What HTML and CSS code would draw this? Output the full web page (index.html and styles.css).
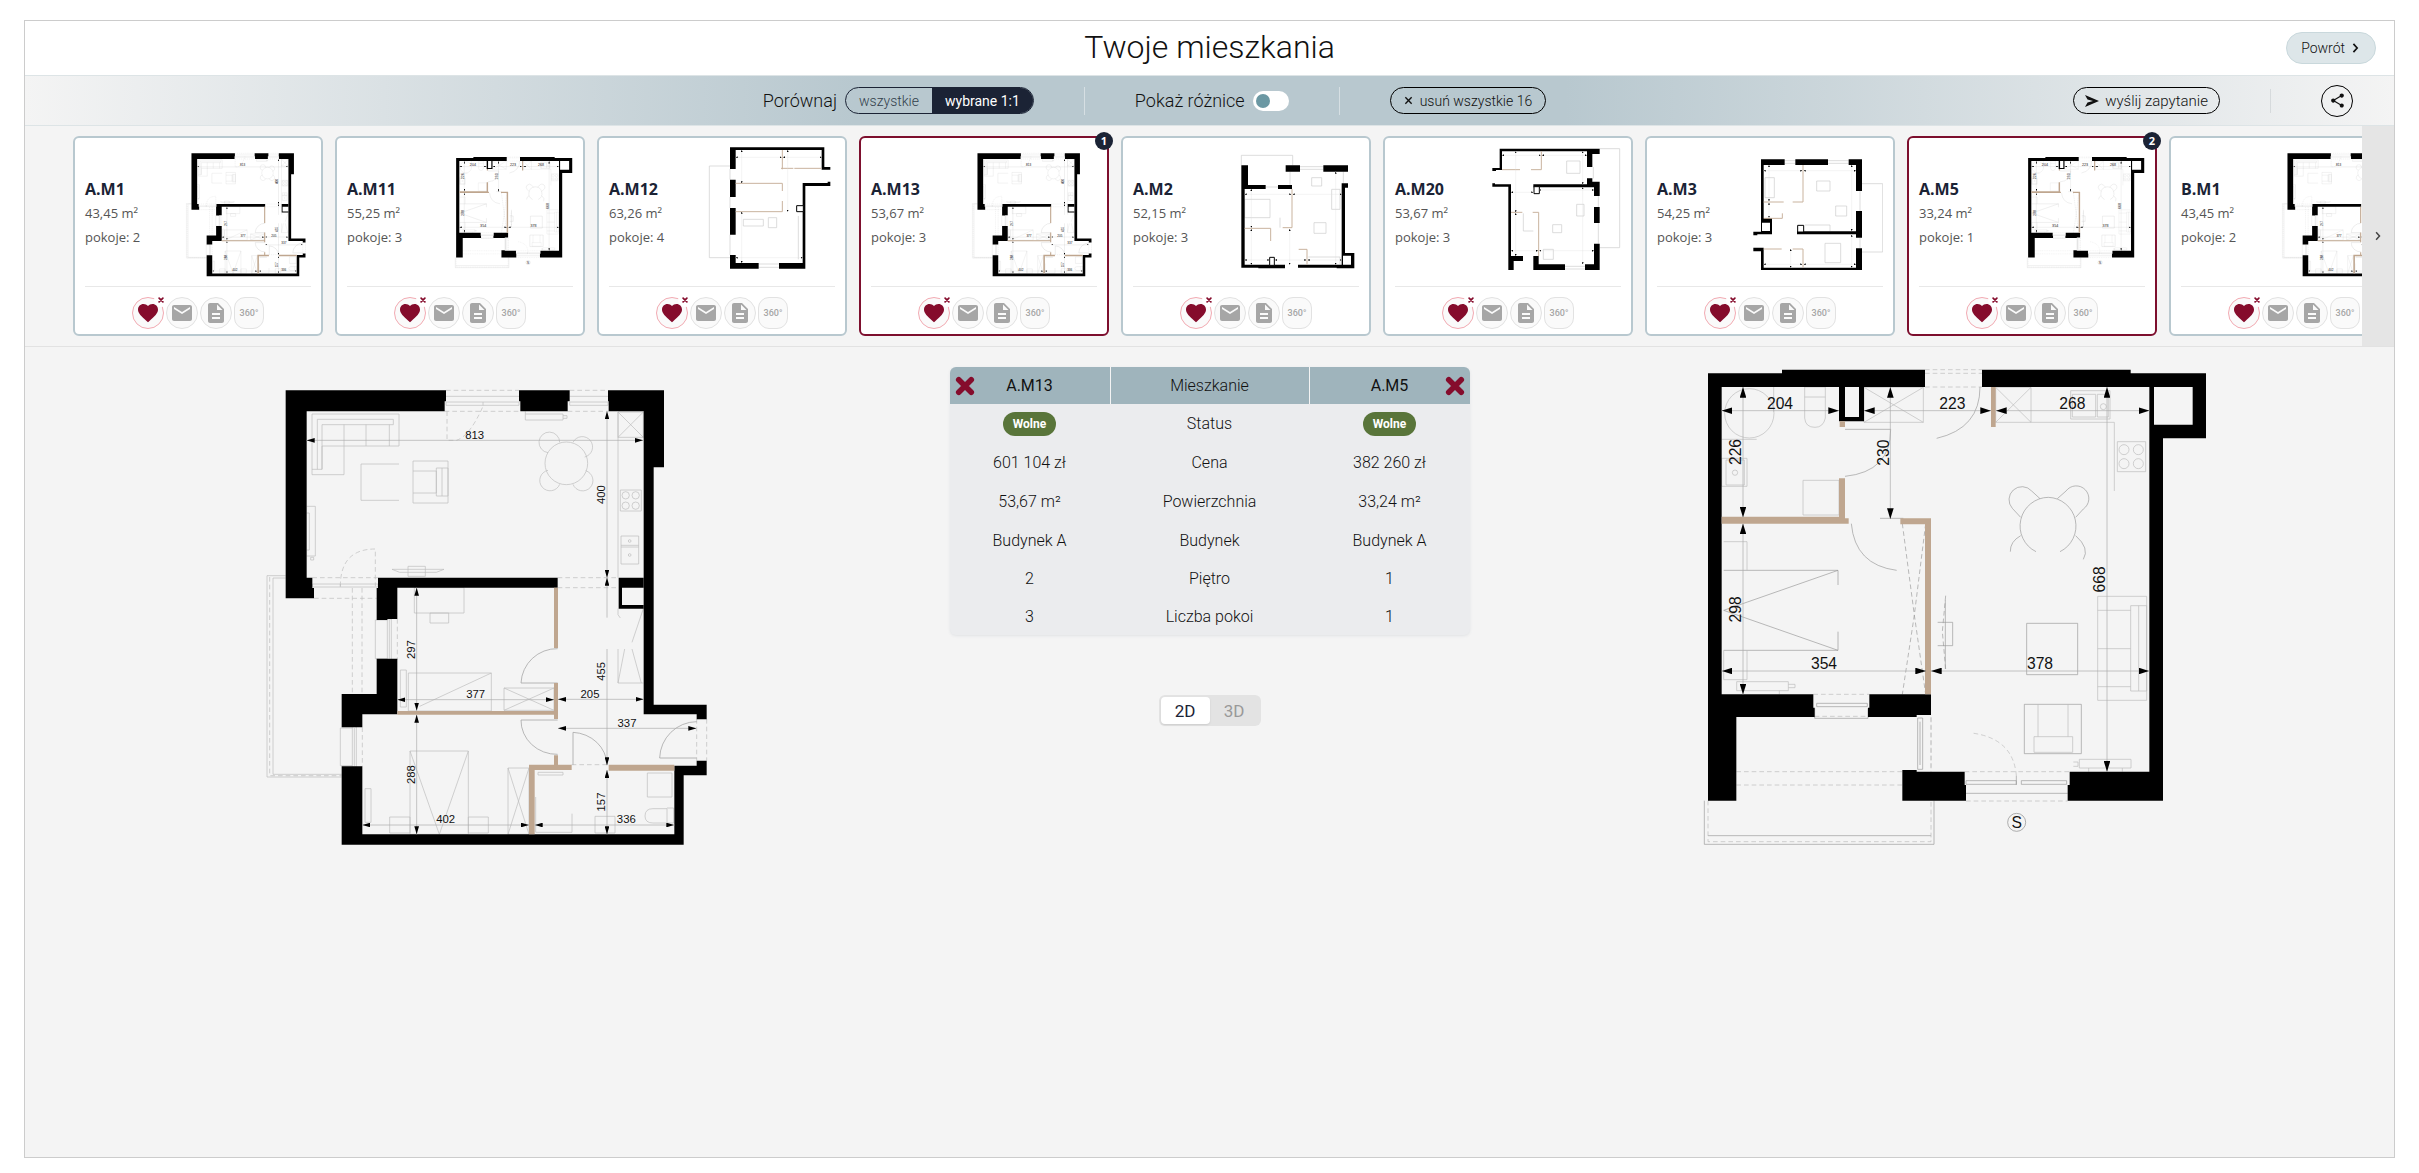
FILE: index.html
```html
<!DOCTYPE html>
<html lang="pl">
<head>
  <meta charset="UTF-8">
  <meta name="viewport" content="width=device-width, initial-scale=1.0">
  <title>Twoje mieszkania</title>
  <link rel="stylesheet" href="styles.css">
</head>
<body>

<!-- ikony i rzuty mieszkań -->
<svg class="defs" width="0" height="0" aria-hidden="true">
  <defs>
    <symbol id="i-heart" viewBox="0 0 24 24"><path d="M12 21.35l-1.45-1.32C5.4 15.36 2 12.28 2 8.5 2 5.42 4.42 3 7.5 3c1.74 0 3.41.81 4.5 2.09C13.09 3.81 14.76 3 16.5 3 19.58 3 22 5.42 22 8.5c0 3.78-3.4 6.86-8.55 11.54L12 21.35z"/></symbol>
    <symbol id="i-mail" viewBox="0 0 24 24"><path d="M20 4H4c-1.1 0-2 .9-2 2v12c0 1.1.9 2 2 2h16c1.1 0 2-.9 2-2V6c0-1.1-.9-2-2-2zm0 4l-8 5-8-5V6l8 5 8-5v2z"/></symbol>
    <symbol id="i-doc" viewBox="0 0 24 24"><path d="M14 2H6c-1.1 0-2 .9-2 2v16c0 1.1.9 2 2 2h12c1.1 0 2-.9 2-2V8l-6-6zm2 16H8v-2h8v2zm0-4H8v-2h8v2zm-3-5V3.500L18.500 9H13z"/></symbol>
    <symbol id="i-x" viewBox="0 0 16 16"><path d="M3 3l10 10M13 3L3 13" fill="none" stroke="currentColor" stroke-width="4.500" stroke-linecap="round"/></symbol>
    <symbol id="i-close" viewBox="0 0 10 10"><path d="M1.500 1.500l7 7M8.500 1.500l-7 7" fill="none" stroke="currentColor" stroke-width="1.500"/></symbol>
    <symbol id="i-next" viewBox="0 0 8 12"><path d="M1.500 1l4.500 5-4.500 5" fill="none" stroke="currentColor" stroke-width="2"/></symbol>
    <symbol id="i-send" viewBox="0 0 14 12"><path d="M0 0l14 6-14 6 2.500-4.500L8 6 2.500 4.500z"/></symbol>
    <symbol id="i-share" viewBox="0 0 24 24"><path d="M18 16.080c-.76 0-1.440.3-1.960.77L8.910 12.700c.05-.23.09-.46.09-.7s-.04-.47-.09-.7l7.050-4.110c.54.5 1.250.81 2.040.81 1.660 0 3-1.340 3-3s-1.340-3-3-3-3 1.340-3 3c0 .24.04.47.09.7L8.040 9.810C7.500 9.310 6.790 9 6 9c-1.660 0-3 1.340-3 3s1.340 3 3 3c.79 0 1.500-.31 2.040-.81l7.120 4.160c-.05.21-.08.43-.08.65 0 1.610 1.310 2.920 2.920 2.920s2.920-1.310 2.920-2.920-1.310-2.920-2.920-2.920z"/></symbol>

    <marker id="arrow-s" viewBox="0 0 24 14" refX="24" refY="7" markerWidth="24" markerHeight="14" markerUnits="userSpaceOnUse" orient="auto-start-reverse"><path d="M0 0L24 7L0 14z"/></marker>
    <marker id="arrow-l" viewBox="0 0 32 20" refX="32" refY="10" markerWidth="32" markerHeight="20" markerUnits="userSpaceOnUse" orient="auto-start-reverse"><path d="M0 0L32 10L0 20z"/></marker>
    <marker id="tick" viewBox="0 0 6 6" refX="6" refY="3" markerWidth="6" markerHeight="6" markerUnits="userSpaceOnUse" orient="auto-start-reverse"><path d="M0 0L6 3L0 6z"/></marker>

    <!-- 3 pokoje, 53,67 m2 -->
    <g id="plan-m13" class="plan-s">
      <g class="thin">
        <path d="M108 618H52V1222H276M108 625H70V1214H276"/>
        <path class="dash" d="M60 622V1218H276M308 655V973M337 655V973M193 686H381M188 624H385M592 125V212H620Q660 200 700 110M272 650Q272 538 377 538V650"/>
        <path d="M589 80H808M589 97H808V107H589ZM700 97V107M960 80H1075M960 97H1075V107H960ZM188 643H385V652H188ZM272 643V652"/>
        <path class="dash" d="M589 62H808M585 125H812M960 62H1075M954 125H1077M924 624H1107M924 654H1107M443 748V870M338 1073V1190M1341 1048V1173M1371 1048V1173M966 1185H1077"/>
        <path d="M377 751V867M377 751H413M377 867H413M413 748V870H425V748ZM419 751V867M272 1075V1188M272 1075H308M272 1188H308M308 1071V1193H320V1071ZM314 1075V1190"/>
        <!-- salon -->
        <path d="M187 133H448V229H283V315H187ZM203 299V149H431V165H217V299H187M217 229H283V165M349 165V229M419 165V229M217 229V299"/>
        <path d="M448 283H334V392H448M490 274H595V400H490ZM490 304H560V370H490M560 295H595V379H560ZM577 295V379"/>
        <path d="M827 125V151H940V133H827M940 138H952V146H940M171 410H197V559H171M171 430H179V541H171M183 563H192V571H183Z"/>
        <circle cx="950" cy="281" r="64"/>
        <path d="M895 249A31 31 0 1 1 930 218M970 218A31 31 0 1 1 1005 262M895 302A31 31 0 1 0 930 344M970 344A31 31 0 1 0 1008 303"/>
        <path d="M427 599H583L560 608H450ZM475 590H527V620H475Z"/>
        <!-- kuchnia -->
        <path d="M1105 127V624M1105 127H1181V203H1105ZM1105 127L1181 203M1181 127L1105 203M1112 361H1175V424H1112ZM1114 499H1167V583H1114ZM1114 527H1167M1114 532H1167"/>
        <circle cx="1128" cy="377" r="11"/><circle cx="1158" cy="377" r="11"/><circle cx="1128" cy="408" r="11"/><circle cx="1158" cy="408" r="11"/>
        <circle cx="1140" cy="514" r="4"/><circle cx="1140" cy="556" r="4"/>
        <path d="M1105 717V735L1112 745M1181 717L1147 818M1105 838V940H1181M1105 940L1125 838M1147 838L1175 940"/>
        <!-- sypialnie -->
        <path d="M494 654H643V730H494ZM541 730H597V760H541ZM476 910H725V1024H476ZM510 1010L725 910M763 955H913V1022H763ZM763 955L913 1022M763 1022L913 955M452 901H470V1012H452Z"/>
        <path d="M481 1144H656V1394H481ZM481 1144L569 1394L656 1144M420 1342H481V1390H420ZM656 1342H716V1390H656ZM775 1195H838V1394H775ZM775 1195L838 1394M838 1195L775 1394M346 1257H364V1358H346Z"/>
        <!-- łazienka -->
        <path d="M865 1208H940V1216H865ZM858 1282V1388H967V1332M1036 1340H1096V1390H1036ZM1193 1210H1267V1282H1193ZM1252 1317H1210Q1186 1317 1186 1339Q1186 1360 1210 1360H1252ZM1252 1315H1272V1360H1252"/>
        <path class="door" d="M924 837A108 108 0 0 0 814 940H924M924 1051H814A108 102 0 0 0 924 1154M970 1185V1088A108 100 0 0 1 1072 1185M1341 1056A112 112 0 0 0 1230 1165H1341"/>
      </g>
      <g class="wall">
        <path d="M108 62H589V95H585V125H171V624H188V655H193V686H108Z"/>
        <path d="M808 62H960V95H954V125H812V95H808Z"/>
        <path d="M1075 62H1243V293H1212V1005H1371V1049H1341V1034H1182V125H1077V95H1075Z"/>
        <path d="M385 624H924V654H443V748H413V751H381V655H385Z"/>
        <path d="M381 867H443V1034H338V1073H276V973H381Z"/>
        <path d="M276 1190H338V1394H1274V1188H1341V1173H1371V1217H1302V1425H276Z"/>
        <path d="M1107 624H1182V654H1117V706H1182V717H1107Z"/>
      </g>
      <path class="part" d="M913 654H925V835H913ZM913 940H925V1048H913ZM443 1024H925V1035H443ZM913 1157H925V1187H913ZM838 1185H966V1201H855V1394H838ZM1077 1185H1274V1203H1077Z"/>
      <g class="dim">
        <path d="M171 212H1180"/><path d="M1072 125V624"/><path class="from" d="M1072 624V744"/><path class="to" d="M1072 838V1187"/><path d="M1072 1201V1394"/>
        <path d="M501 654V1023"/><path d="M501 1035V1394"/><path d="M443 990H913"/><path d="M925 989H1182"/><path d="M925 1076H1340"/><path d="M338 1366H838"/><path d="M855 1366H1274"/>
      </g>
      <g class="num">
        <text x="675" y="208">813</text>
        <text x="678" y="986">377</text>
        <text x="1021" y="985">205</text>
        <text x="1132" y="1072">337</text>
        <text x="588" y="1361">402</text>
        <text x="1130" y="1361">336</text>
        <text transform="translate(1067 375) rotate(-90)">400</text>
        <text transform="translate(1067 905) rotate(-90)">455</text>
        <text transform="translate(1067 1297) rotate(-90)">157</text>
        <text transform="translate(496 840) rotate(-90)">297</text>
        <text transform="translate(496 1215) rotate(-90)">288</text>
      </g>
    </g>

    <!-- 1 pokój, 33,24 m2 -->
    <g id="plan-m5" class="plan-l">
      <g class="thin">
        <path class="mid" d="M43 1337V1468H732V1337M54 1442H723"/>
        <path class="dash" d="M54 1337V1460H723V1086M139 1250H637M139 1290H637M723 1086V1245M705 44H876M705 55H876M705 96H876M370 1018H538M374 1084H534M828 1338H1133M824 1250H1139"/>
        <path class="mid" d="M374 1060V1090H534V1060M380 1045H532V1055H380ZM683 1089H698V1243H683ZM690 1100V1230M828 1315H1133M828 1277H979V1288H828ZM994 1277H1130V1288H994ZM979 1262V1290"/>
        <!-- łazienka -->
        <path d="M95 253H200M251 96V170M344 96H406V189Q400 217 375 217Q346 217 344 189ZM344 126H406M95 310H171V394H95ZM108 315H163V390H108ZM339 376H447V480H339Z"/>
        <circle cx="178" cy="175" r="74"/><circle cx="135" cy="353" r="8"/>
        <!-- szafy i kuchnia -->
        <path d="M522 97H700V202H522ZM522 97L700 202M700 97L522 202M917 97H1023V202H917ZM917 97L1023 202M1023 97L917 202M1023 202H1273V408M1142 107H1260V192H1142ZM1147 118H1217V186H1147ZM1222 118H1255V186H1222ZM1282 260H1367V350H1282Z"/>
        <circle cx="1240" cy="155" r="9"/><circle cx="1302" cy="284" r="15"/><circle cx="1345" cy="284" r="15"/><circle cx="1302" cy="326" r="15"/><circle cx="1345" cy="326" r="15"/>
        <path class="mid" d="M1038 590A86 86 0 0 1 1075 427A86 86 0 0 1 1110 590M992 487L967 460A38 38 0 1 1 1025 408L1050 431M1102 431L1128 408A38 38 0 1 1 1180 462L1157 487M992 542Q960 560 961 590M1157 542Q1200 580 1180 613"/>
        <!-- sypialnia -->
        <path class="mid" d="M101 646H444V690M101 886H444V830M444 646L101 766L444 886"/>
        <path d="M101 560H171V646M101 886V974H171V886M140 980H295V1007H140ZM295 988H315V998H295M268 1007V1018"/>
        <path class="dash mid" d="M637 506L673 780L637 1018M707 506L673 780L707 1018M767 722L757 830L767 942"/>
        <!-- salon -->
        <path class="mid" d="M766 735V942M743 802H788V872H743M1010 805H1163V959H1010ZM1003 1048H1174V1196H1003Z"/>
        <path d="M1223 724H1370V1036H1223ZM1322 752H1370V1008H1322ZM1346 752V1008M1223 766H1322M1223 881H1322M1223 995H1322M1044 1048V1145M1134 1048V1145M1032 1145H1148V1192H1032ZM1168 1213H1323V1239H1168ZM1150 1221H1164V1234H1150M1196 1239V1250M1297 1239V1250"/>
        <path class="dash" d="M979 1262Q970 1150 845 1134"/>
        <path class="door" d="M870 96Q870 220 740 250M465 223H602Q602 350 465 364M484 506Q495 630 620 646M570 490H640"/>
      </g>
      <g class="wall">
        <path fill-rule="evenodd" d="M54 55H276V44H705V96H522V199H447V96H95V1018H370V1058H374V1086H139V1337H54ZM465 96H507V186H465Z"/>
        <path fill-rule="evenodd" d="M876 44H1322V55H1548V250H1419V1337H1133V1290H1139V1250H1378V96H876ZM1392 96H1508V209H1392Z"/>
        <path d="M538 1018H723V1080H680V1086H534V1058H538Z"/>
        <path d="M637 1245H680V1250H824V1290H828V1337H637Z"/>
      </g>
      <path class="part" d="M449 199H465V216H449ZM447 370H465V490H476V506H95V485H447ZM631 490H723V1018H705V508H631ZM903 96H917V216H903Z"/>
      <g class="dim">
        <path d="M95 167H447"/><path d="M522 167H903"/><path d="M918 167H1378"/><path d="M159 96V487"/><path d="M159 506V1018"/><path d="M601 96V492"/><path d="M1251 96V1250"/><path d="M95 948H708"/><path d="M723 948H1378"/>
      </g>
      <g class="num">
        <text x="270" y="161">204</text>
        <text x="787" y="161">223</text>
        <text x="1147" y="161">268</text>
        <text x="402" y="942">354</text>
        <text x="1050" y="942">378</text>
        <text transform="translate(154 291) rotate(-90)">226</text>
        <text transform="translate(596 293) rotate(-90)">230</text>
        <text transform="translate(154 763) rotate(-90)">298</text>
        <text transform="translate(1246 673) rotate(-90)">668</text>
        <circle class="ring" cx="980" cy="1402" r="27"/>
        <text x="980" y="1418">S</text>
      </g>
    </g>
  </defs>
</svg>

<main class="frame">
  <header class="top">
    <h1>Twoje mieszkania</h1>
    <button class="back" type="button">Powrót <svg width="7" height="10"><use href="#i-next"/></svg></button>
  </header>

  <div class="toolbar">
    <div class="tools">
      <div class="tool">
        <span class="tool-label">Porównaj</span>
        <div class="segment">
          <button type="button">wszystkie</button>
          <button type="button" class="on">wybrane 1:1</button>
        </div>
      </div>
      <div class="tool split">
        <label class="tool-label" for="diff">Pokaż różnice</label>
        <input type="checkbox" id="diff" class="switch">
      </div>
      <div class="tool split">
        <button class="pill clear" type="button"><svg width="9" height="9"><use href="#i-close"/></svg>usuń wszystkie 16</button>
      </div>
    </div>
    <div class="actions">
      <button class="pill" type="button"><svg width="14" height="12"><use href="#i-send"/></svg>wyślij zapytanie</button>
      <span class="line"></span>
      <button class="share" type="button" aria-label="Udostępnij"><svg width="17" height="17"><use href="#i-share"/></svg></button>
    </div>
  </div>

  <section class="strip">
    <ul class="cards">
      <li class="card">
        <div class="info"><div class="desc"><h2>A.M1</h2><p>43,45 m²</p><p>pokoje: 2</p></div>
          <svg class="thumb" viewBox="-8 -8 1440 1440"><use href="#plan-m13"/></svg></div>
        <div class="icons">
          <button type="button" class="fav" aria-label="Usuń z ulubionych"><svg><use href="#i-heart"/></svg><i><svg><use href="#i-x"/></svg></i></button>
          <button type="button" aria-label="Wyślij"><svg><use href="#i-mail"/></svg></button>
          <button type="button" aria-label="Karta"><svg><use href="#i-doc"/></svg></button>
          <button type="button" class="tour">360°</button>
        </div>
      </li>
      <li class="card">
        <div class="info"><div class="desc"><h2>A.M11</h2><p>55,25 m²</p><p>pokoje: 3</p></div>
          <svg class="thumb" viewBox="-115 -85 1673 1673"><use href="#plan-m5"/></svg></div>
        <div class="icons">
          <button type="button" class="fav" aria-label="Usuń z ulubionych"><svg><use href="#i-heart"/></svg><i><svg><use href="#i-x"/></svg></i></button>
          <button type="button" aria-label="Wyślij"><svg><use href="#i-mail"/></svg></button>
          <button type="button" aria-label="Karta"><svg><use href="#i-doc"/></svg></button>
          <button type="button" class="tour">360°</button>
        </div>
      </li>
      <li class="card">
        <div class="info"><div class="desc"><h2>A.M12</h2><p>63,26 m²</p><p>pokoje: 4</p></div>
          <svg class="thumb plan-t" viewBox="315 63 390 390">
            <path class="thin" d="M390 120H328V395H390M390 129V161M390 213V246M390 326V387M476 414H537M476 424H537M430 280H490V300H430ZM505 275H530V305H505ZM595 270V400"/>
            <path class="wall" d="M390 64H673V123H691V131H665V72H407V129H390ZM390 161H407V213H390ZM390 246H407V326H390ZM390 387H407V411H476V428H390ZM537 411H608V171H683V167H691V180H616V428H537Z"/>
            <path class="box" d="M590 239H610V257H590Z"/>
            <path class="part-line" d="M547 72V130M543 127H580M583 127H665M407 172H547V195M547 225V257H407"/>
            <g class="dim"><path d="M407 94H545"/><path d="M549 94H665"/><path d="M407 395H608"/><path d="M425 72V172"/><path d="M425 257V411"/><path d="M563 72V257"/></g>
          </svg></div>
        <div class="icons">
          <button type="button" class="fav" aria-label="Usuń z ulubionych"><svg><use href="#i-heart"/></svg><i><svg><use href="#i-x"/></svg></i></button>
          <button type="button" aria-label="Wyślij"><svg><use href="#i-mail"/></svg></button>
          <button type="button" aria-label="Karta"><svg><use href="#i-doc"/></svg></button>
          <button type="button" class="tour">360°</button>
        </div>
      </li>
      <li class="card picked">
        <span class="count">1</span>
        <div class="info"><div class="desc"><h2>A.M13</h2><p>53,67 m²</p><p>pokoje: 3</p></div>
          <svg class="thumb" viewBox="-8 -8 1440 1440"><use href="#plan-m13"/></svg></div>
        <div class="icons">
          <button type="button" class="fav" aria-label="Usuń z ulubionych"><svg><use href="#i-heart"/></svg><i><svg><use href="#i-x"/></svg></i></button>
          <button type="button" aria-label="Wyślij"><svg><use href="#i-mail"/></svg></button>
          <button type="button" aria-label="Karta"><svg><use href="#i-doc"/></svg></button>
          <button type="button" class="tour">360°</button>
        </div>
      </li>
      <li class="card">
        <div class="info"><div class="desc"><h2>A.M2</h2><p>52,15 m²</p><p>pokoje: 3</p></div>
          <svg class="thumb plan-t" viewBox="357 63 390 390">
            <path class="thin" d="M394 118V88H548V118M540 137V177M467 183H504M570 122H640M570 130H640M700 137V172M605 155H635V180H605ZM612 290H648V322H612ZM665 190H690V250H665ZM404 220H480V275H404ZM510 275V305M595 393H690V415"/>
            <path class="wall" d="M394 118H414V177H467V189H404V416H525V427H445V425H394ZM504 177H546V189H504ZM527 118H570V137H527ZM640 118H714V137H640Z"/>
            <path class="wall" fill-rule="evenodd" d="M695 172H714V185H705V381H733V427H680V425H564V416H695ZM699 389H723V416H699Z"/>
            <path class="box" d="M479 394H493V418H479Z"/>
            <path class="part-line" d="M546 189V305H518M404 307H482V345M566 370H591V416"/>
            <g class="dim"><path d="M404 205H544"/><path d="M548 205H695"/><path d="M404 402H478"/><path d="M495 402H589"/><path d="M593 402H695"/><path d="M424 189V305"/><path d="M424 309V416"/><path d="M539 309V416"/><path d="M677 137V416"/></g>
          </svg></div>
        <div class="icons">
          <button type="button" class="fav" aria-label="Usuń z ulubionych"><svg><use href="#i-heart"/></svg><i><svg><use href="#i-x"/></svg></i></button>
          <button type="button" aria-label="Wyślij"><svg><use href="#i-mail"/></svg></button>
          <button type="button" aria-label="Karta"><svg><use href="#i-doc"/></svg></button>
          <button type="button" class="tour">360°</button>
        </div>
      </li>
      <li class="card">
        <div class="info"><div class="desc"><h2>A.M20</h2><p>53,67 m²</p><p>pokoje: 3</p></div>
          <svg class="thumb plan-t" viewBox="1143 63 390 390">
            <path class="thin" d="M1469 68H1529V365H1469M1450 123V157M1465 210V243M1465 291V353M1365 421H1425M1365 429H1425M1370 105H1410V142H1370ZM1328 296H1355V320H1328ZM1300 370H1330V400H1300ZM1400 235H1422V270H1400ZM1240 262V315H1270"/>
            <path class="wall" d="M1169 68H1469V84H1447V123H1431V76H1176V132H1158V135H1147V126H1169ZM1147 172H1155V175H1203V390H1239V405H1211V432H1195V182H1147ZM1270 175H1431V157H1447V167H1469V210H1452V184H1270ZM1452 243H1469V291H1452ZM1270 390H1286V415H1365V432H1270ZM1425 415H1452V353H1469V432H1425Z"/>
            <path class="box" d="M1272 182H1288V203H1272Z"/>
            <path class="part-line" d="M1294 76V131H1263M1176 131H1230M1203 259H1237M1268 259H1286V390"/>
            <g class="dim"><path d="M1176 88H1292"/><path d="M1296 88H1431"/><path d="M1203 199H1270"/><path d="M1288 192H1452"/><path d="M1203 374H1284"/><path d="M1288 374H1452"/><path d="M1217 76V259"/><path d="M1217 261V390"/><path d="M1418 76V175"/><path d="M1418 184V415"/></g>
          </svg></div>
        <div class="icons">
          <button type="button" class="fav" aria-label="Usuń z ulubionych"><svg><use href="#i-heart"/></svg><i><svg><use href="#i-x"/></svg></i></button>
          <button type="button" aria-label="Wyślij"><svg><use href="#i-mail"/></svg></button>
          <button type="button" aria-label="Karta"><svg><use href="#i-doc"/></svg></button>
          <button type="button" class="tour">360°</button>
        </div>
      </li>
      <li class="card">
        <div class="info"><div class="desc"><h2>A.M3</h2><p>54,25 m²</p><p>pokoje: 3</p></div>
          <svg class="thumb plan-t" viewBox="369 63 390 390">
            <path class="thin" d="M696 173H758V378H696M464 104H496M464 112H496M594 104H656M594 112H656M690 195V255M690 335V367M560 165H600V195H560ZM405 155H433V215H405ZM585 352H632V410H585ZM525 297H600V315M617 240H650V270H617Z"/>
            <path class="wall" d="M393 100H464V117H401V276H393ZM496 100H594V117H496ZM656 100H696V195H678V117H656ZM678 255H696V335H678V325H501V316H678ZM678 367H696V432H393V376H370V365H401V425H678Z"/>
            <path class="wall" fill-rule="evenodd" d="M393 276H426V325H382V328H370V317H393ZM396 290H420V315H396Z"/>
            <path class="box" d="M503 298H521V318H503Z"/>
            <path class="part-line" d="M519 117V228H488M401 228H461M401 277H457V262M401 369H455M488 369H519V425"/>
            <g class="dim"><path d="M401 134H517"/><path d="M521 134H678"/><path d="M401 415H517"/><path d="M521 415H678"/><path d="M417 117V226"/><path d="M417 230V275"/><path d="M665 117V315"/><path d="M665 326V425"/><path d="M482 369V425"/></g>
          </svg></div>
        <div class="icons">
          <button type="button" class="fav" aria-label="Usuń z ulubionych"><svg><use href="#i-heart"/></svg><i><svg><use href="#i-x"/></svg></i></button>
          <button type="button" aria-label="Wyślij"><svg><use href="#i-mail"/></svg></button>
          <button type="button" aria-label="Karta"><svg><use href="#i-doc"/></svg></button>
          <button type="button" class="tour">360°</button>
        </div>
      </li>
      <li class="card picked">
        <span class="count">2</span>
        <div class="info"><div class="desc"><h2>A.M5</h2><p>33,24 m²</p><p>pokoje: 1</p></div>
          <svg class="thumb" viewBox="-115 -85 1673 1673"><use href="#plan-m5"/></svg></div>
        <div class="icons">
          <button type="button" class="fav" aria-label="Usuń z ulubionych"><svg><use href="#i-heart"/></svg><i><svg><use href="#i-x"/></svg></i></button>
          <button type="button" aria-label="Wyślij"><svg><use href="#i-mail"/></svg></button>
          <button type="button" aria-label="Karta"><svg><use href="#i-doc"/></svg></button>
          <button type="button" class="tour">360°</button>
        </div>
      </li>
      <li class="card">
        <div class="info"><div class="desc"><h2>B.M1</h2><p>43,45 m²</p><p>pokoje: 2</p></div>
          <svg class="thumb" viewBox="-8 -8 1440 1440"><use href="#plan-m13"/></svg></div>
        <div class="icons">
          <button type="button" class="fav" aria-label="Usuń z ulubionych"><svg><use href="#i-heart"/></svg><i><svg><use href="#i-x"/></svg></i></button>
          <button type="button" aria-label="Wyślij"><svg><use href="#i-mail"/></svg></button>
          <button type="button" aria-label="Karta"><svg><use href="#i-doc"/></svg></button>
          <button type="button" class="tour">360°</button>
        </div>
      </li>
    </ul>
    <button class="next" type="button" aria-label="Następne"><svg width="6" height="10"><use href="#i-next"/></svg></button>
  </section>

  <section class="compare">
    <div class="plan">
      <svg class="plan-a" viewBox="-8 -8 1440 1440"><use href="#plan-m13"/></svg>
    </div>
    <div class="middle">
      <table>
        <thead>
          <tr>
            <th class="name"><button type="button" class="del" aria-label="Usuń A.M13"><svg><use href="#i-x"/></svg></button>A.M13</th>
            <th class="label">Mieszkanie</th>
            <th class="name">A.M5<button type="button" class="del right" aria-label="Usuń A.M5"><svg><use href="#i-x"/></svg></button></th>
          </tr>
        </thead>
        <tbody>
          <tr class="tall"><td><span class="status">Wolne</span></td><td>Status</td><td><span class="status">Wolne</span></td></tr>
          <tr class="tall"><td>601 104 zł</td><td>Cena</td><td>382 260 zł</td></tr>
          <tr class="tall"><td>53,67 m²</td><td>Powierzchnia</td><td>33,24 m²</td></tr>
          <tr><td>Budynek A</td><td>Budynek</td><td>Budynek A</td></tr>
          <tr><td>2</td><td>Piętro</td><td>1</td></tr>
          <tr><td>3</td><td>Liczba pokoi</td><td>1</td></tr>
        </tbody>
      </table>
      <div class="view">
        <button type="button" class="on">2D</button>
        <button type="button">3D</button>
      </div>
    </div>
    <div class="plan">
      <svg class="plan-b" viewBox="-99 36 1650 1440"><use href="#plan-m5"/></svg>
    </div>
  </section>
</main>

</body>
</html>
```
FILE: styles.css
```css
* {
  box-sizing: border-box;
}
body {
  margin: 0;
  padding: 20px 24px 15px;
  background: #fff;
  color: #111;
  font-family: Roboto, Arial, sans-serif;
  font-weight: 300;
}
h1, h2, p, ul {
  margin: 0;
  padding: 0;
  font-weight: 300;
}
button {
  margin: 0;
  padding: 0;
  border: none;
  background: none;
  color: inherit;
  font: inherit;
  cursor: pointer;
}
svg {
  display: block;
  fill: currentColor;
}
.defs {
  position: absolute;
}
.frame {
  display: flex;
  flex-direction: column;
  min-height: calc(100vh - 35px);
  border: 1px solid #ccc;
  background: #f4f4f4;
}

/* header */
.top {
  display: grid;
  grid-template-columns: 1fr auto 1fr;
  align-items: center;
  height: 54px;
  padding: 0 18px;
  background: #fff;
}
.top h1 {
  grid-column: 2;
  padding-bottom: 2px;
  font-size: 32px;
  line-height: 40px;
}
.back {
  justify-self: end;
  display: flex;
  align-items: center;
  gap: 7px;
  height: 32px;
  padding: 0 16px 0 14px;
  border: 1px solid #c9d8dc;
  border-radius: 16px;
  background: #dde6e9;
  font-size: 14px;
}

/* toolbar */
.toolbar {
  display: grid;
  grid-template-columns: 7fr auto 5fr auto;
  align-items: center;
  height: 51px;
  padding-right: 41px;
  border-top: 1px solid #dde4e6;
  border-bottom: 1px solid #dde4e6;
  background: linear-gradient(90deg, #f4f4f4, #b8c8cf 35%, #b8c8cf 65%, #f4f4f4);
}
.tools {
  grid-column: 2;
  display: flex;
  align-items: center;
}
.tool {
  display: flex;
  align-items: center;
  gap: 8px;
  height: 28px;
}
.split {
  margin-left: 50px;
  padding-left: 50px;
  border-left: 1px solid #d6dfe3;
}
.tool-label {
  font-size: 18px;
  line-height: 20px;
}
.segment {
  display: flex;
  height: 27px;
  border: 1px solid #1b2335;
  border-radius: 14px;
  overflow: hidden;
  font-size: 14px;
}
.segment button {
  padding: 0 13px;
  color: #333f4c;
}
.segment .on {
  background: #1b2335;
  color: #fff;
  font-weight: 400;
}
.switch {
  appearance: none;
  width: 36px;
  height: 20px;
  margin: 0;
  padding: 3px;
  border-radius: 10px;
  background: #fff;
}
.switch::before {
  content: "";
  display: block;
  width: 14px;
  height: 14px;
  border-radius: 50%;
  background: #6b98a3;
}
.switch:checked::before {
  margin-left: auto;
}
.pill {
  display: flex;
  align-items: center;
  gap: 6px;
  height: 27px;
  padding: 0 11px;
  border: 1px solid #000;
  border-radius: 14px;
  font-size: 15px;
}
.clear {
  gap: 7px;
  padding: 0 13px;
  font-size: 14px;
}
.actions {
  grid-column: 4;
  display: flex;
  align-items: center;
}
.line {
  width: 1px;
  height: 24px;
  margin: 0 50px;
  background: #d6dadc;
}
.share {
  display: grid;
  place-items: center;
  width: 32px;
  height: 32px;
  border: 1px solid #000;
  border-radius: 50%;
}

/* cards */
.strip {
  display: flex;
  border-bottom: 1px solid #e2e2e2;
}
.cards {
  flex: 1;
  min-width: 0;
  display: flex;
  gap: 12px;
  padding: 10px 0 10px 48px;
  overflow: hidden;
  list-style: none;
}
.card {
  position: relative;
  flex: none;
  width: 250px;
  height: 200px;
  border: 2px solid #b8c8cf;
  border-radius: 6px;
  background: #fff;
}
.picked {
  border-color: #7d0f2e;
}
.count {
  position: absolute;
  top: -6px;
  right: -6px;
  width: 18px;
  height: 18px;
  border-radius: 50%;
  background: #1b2335;
  color: #fff;
  font: 700 11px/18px "Open Sans", sans-serif;
  text-align: center;
}
.info {
  display: flex;
  align-items: center;
  justify-content: space-between;
  height: 149px;
  margin: 0 10px;
  border-bottom: 1px solid #e8e8e8;
}
.desc {
  padding-top: 1px;
  font-family: "Open Sans", sans-serif;
  font-size: 13px;
  line-height: 24px;
  color: #555;
}
.desc p {
  font-weight: 400;
}
.desc h2 {
  font-size: 16px;
  font-weight: 700;
  color: #1b2335;
}
.thumb {
  flex: none;
  width: 130px;
  height: 130px;
}
.icons {
  display: flex;
  justify-content: center;
  gap: 2px;
  padding-top: 10px;
}
.icons button {
  display: grid;
  place-items: center;
  width: 32px;
  height: 32px;
  border: 1px solid #e2e2e2;
  border-radius: 50%;
  background: #fafafa;
  color: #a6a6a6;
}
.icons svg {
  width: 24px;
  height: 24px;
}
.icons .fav {
  position: relative;
  border-color: #f2aab2;
  color: #850c2c;
}
.fav > svg {
  position: relative;
  z-index: 1;
}
.fav i {
  position: absolute;
  top: -5px;
  right: -5px;
  display: grid;
  place-items: center;
  width: 14px;
  height: 14px;
  border-radius: 50%;
  background: #fff;
}
.icons i svg {
  width: 6px;
  height: 6px;
}
.icons .tour {
  width: 30px;
  border-radius: 11px;
  font-size: 9px;
  font-weight: 500;
}
.next {
  display: grid;
  place-items: center;
  width: 32px;
  background: #e5e5e5;
  color: #444;
}

/* comparison */
.compare {
  flex: 1;
  display: grid;
  grid-template-columns: 1fr 520px 1fr;
  align-items: start;
  padding: 20px 0;
}
.plan {
  display: flex;
  justify-content: center;
}
.plan-a {
  width: 480px;
  height: 480px;
}
.plan-b {
  width: 550px;
  height: 480px;
}
.middle {
  display: flex;
  flex-direction: column;
  align-items: center;
  gap: 60px;
}
table {
  width: 100%;
  border-spacing: 0;
  table-layout: fixed;
  border-radius: 6px;
  overflow: hidden;
  background: #ebecee;
  box-shadow: 0 1px 3px #e0e2e4;
  font-size: 16px;
  text-align: center;
}
th, td {
  height: 38px;
  padding: 0;
}
th {
  position: relative;
  height: 37px;
  background: #9fb4bc;
  font-weight: 300;
}
.name {
  width: 160px;
  font-weight: 400;
}
.label {
  border-left: 1px solid #f4f4f4;
  border-right: 1px solid #f4f4f4;
}
.tall td {
  height: 39px;
}
.del {
  position: absolute;
  top: 9px;
  left: 5px;
  color: #850c2c;
}
.del.right {
  left: auto;
  right: 5px;
}
.del svg {
  width: 20px;
  height: 20px;
}
.status {
  display: inline-block;
  padding: 0 10px;
  border-radius: 12px;
  background: #59753a;
  color: #fff;
  font-size: 12px;
  font-weight: 700;
  line-height: 24px;
}
.view {
  display: flex;
  padding: 2px;
  border-radius: 6px;
  background: #e3e3e3;
  font-size: 17px;
  font-weight: 400;
}
.view button {
  width: 49px;
  height: 27px;
  border-radius: 4px;
  color: #999;
}
.view .on {
  background: #fff;
  color: #1b2335;
  box-shadow: 0 1px 2px #ccc;
}

/* floor plans */
.wall {
  fill: #000;
}
.part {
  fill: #bfa68f;
}
.thin {
  fill: none;
  stroke: #bbb;
  stroke-width: 2;
}
.thin .mid, .door {
  stroke: #999;
}
.dash {
  stroke-dasharray: 14 9;
}
.dim {
  fill: none;
  stroke: #aaa;
  stroke-width: 2;
}
.plan-s .dim path, .plan-s .from, .plan-s .to {
  marker-start: url(#arrow-s);
  marker-end: url(#arrow-s);
}
.plan-s .dim .from {
  marker-end: none;
}
.plan-s .dim .to {
  marker-start: none;
}
.plan-l .dim path {
  marker-start: url(#arrow-l);
  marker-end: url(#arrow-l);
}
marker path {
  fill: #000;
  stroke: none;
}
.num {
  fill: #111;
  font-family: "Liberation Sans", Arial, sans-serif;
  font-weight: 400;
  font-size: 34px;
  text-anchor: middle;
}
.plan-l .num {
  font-size: 47px;
}
.ring {
  fill: none;
  stroke: #888;
  stroke-width: 2;
}
.plan-t .thin {
  stroke: #ccc;
}
.plan-t .dim {
  stroke: #ddd;
  stroke-width: 1;
}
.plan-t .dim path {
  marker-start: url(#tick);
  marker-end: url(#tick);
}
.part-line {
  fill: none;
  stroke: #c9b39e;
  stroke-width: 3;
}
.box {
  fill: #fff;
  stroke: #000;
  stroke-width: 3;
}
```
